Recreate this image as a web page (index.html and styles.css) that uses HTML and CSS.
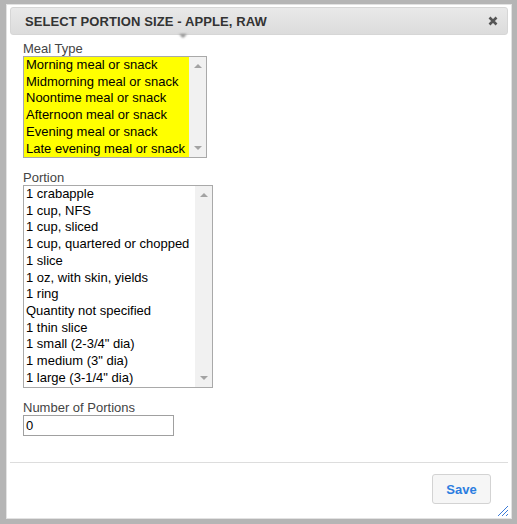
FILE: index.html
```html
<!DOCTYPE html>
<html>
<head>
<meta charset="utf-8">
<link rel="stylesheet" href="styles.css">
</head>
<body>
<div class="page">
  <div class="dialog">
    <div class="titlebar">
      <span class="title">SELECT PORTION SIZE - APPLE, RAW</span>
      <span class="close" aria-label="close">
        <svg width="10" height="10" viewBox="0 0 10 10"><path d="M1.5 1.5 L8.5 8.5 M8.5 1.5 L1.5 8.5" stroke="#555" stroke-width="2.6" stroke-linecap="butt"/></svg>
      </span>
    </div>
    <div class="tip-arrow"></div>
    <div class="content">
      <label class="lbl">Meal Type</label>
      <div class="listbox meal">
        <div class="items">
          <div class="opt sel">Morning meal or snack</div>
          <div class="opt sel">Midmorning meal or snack</div>
          <div class="opt sel">Noontime meal or snack</div>
          <div class="opt sel">Afternoon meal or snack</div>
          <div class="opt sel">Evening meal or snack</div>
          <div class="opt sel">Late evening meal or snack</div>
        </div>
        <div class="scrollbar">
          <span class="arrow up"></span>
          <span class="arrow down"></span>
        </div>
      </div>

      <label class="lbl gap">Portion</label>
      <div class="listbox portion">
        <div class="items">
          <div class="opt">1 crabapple</div>
          <div class="opt">1 cup, NFS</div>
          <div class="opt">1 cup, sliced</div>
          <div class="opt">1 cup, quartered or chopped</div>
          <div class="opt">1 slice</div>
          <div class="opt">1 oz, with skin, yields</div>
          <div class="opt">1 ring</div>
          <div class="opt">Quantity not specified</div>
          <div class="opt">1 thin slice</div>
          <div class="opt">1 small (2-3/4" dia)</div>
          <div class="opt">1 medium (3" dia)</div>
          <div class="opt">1 large (3-1/4" dia)</div>
        </div>
        <div class="scrollbar">
          <span class="arrow up"></span>
          <span class="arrow down"></span>
        </div>
      </div>

      <label class="lbl gap">Number of Portions</label>
      <div class="input">0</div>
    </div>
    <div class="buttonpane">
      <button class="btn">Save</button>
    </div>
    <svg class="resize" width="12" height="12" viewBox="0 0 12 12">
      <path d="M11 1 L1 11 M11 5 L5 11 M11 9 L9 11" stroke="#3b7bd8" stroke-width="1"/>
    </svg>
  </div>
</div>
</body>
</html>
```
FILE: styles.css
```css
html, body {
  margin: 0;
  padding: 0;
}
body {
  background: #b5b5b5;
  font-family: "Liberation Sans", Arial, sans-serif;
  width: 517px;
  height: 524px;
  overflow: hidden;
}
.page {
  padding: 4px 0 0 6px;
}
.dialog {
  position: relative;
  box-sizing: border-box;
  width: 506px;
  height: 515px;
  background: #fff;
  border: 1px solid #e2e2e2;
  padding: 2px 3px 3px 3px;
  display: flex;
  flex-direction: column;
}
.titlebar {
  box-sizing: border-box;
  height: 28px;
  border: 1px solid #d6d6d6;
  border-radius: 3px;
  background: linear-gradient(#e9e9e9, #dcdcdc);
  display: flex;
  align-items: center;
  justify-content: space-between;
  padding: 0 9px 0 14px;
}
.title {
  font-size: 13px;
  font-weight: bold;
  color: #333;
  letter-spacing: 0.1px;
}
.close {
  display: flex;
  width: 10px;
  height: 10px;
}
.tip-arrow {
  position: absolute;
  left: 172px;
  top: 29px;
  width: 0;
  height: 0;
  border-left: 4px solid transparent;
  border-right: 4px solid transparent;
  border-top: 4px solid #8a8a8a;
  filter: blur(1px);
}
.content {
  flex: 1;
  padding: 6px 13px 0 13px;
}
.lbl {
  display: block;
  font-size: 13px;
  line-height: 15px;
  color: #444;
}
.lbl.gap {
  margin-top: 12px;
}
.listbox {
  box-sizing: border-box;
  display: flex;
  border: 1px solid #a9a9a9;
  background: #fff;
}
.listbox.meal {
  width: 184px;
  height: 102px;
}
.listbox.portion {
  width: 190px;
  height: 203px;
}
.items {
  flex: 1;
  overflow: hidden;
}
.opt {
  font-size: 13px;
  line-height: 16.72px;
  height: 16.72px;
  padding-left: 2px;
  color: #000;
  white-space: nowrap;
}
.opt.sel {
  background: #ffff00;
}
.scrollbar {
  width: 17px;
  background: #f1f1f1;
  display: flex;
  flex-direction: column;
  justify-content: space-between;
  align-items: center;
  padding: 7px 0 7px 0;
}
.arrow {
  width: 0;
  height: 0;
  border-left: 4px solid transparent;
  border-right: 4px solid transparent;
}
.arrow.up {
  border-bottom: 4px solid #a3a3a3;
}
.arrow.down {
  border-top: 4px solid #a3a3a3;
}
.input {
  box-sizing: border-box;
  width: 151px;
  height: 21px;
  border: 1px solid #a0a0a0;
  font-size: 13px;
  line-height: 19px;
  padding-left: 2px;
  color: #000;
}
.buttonpane {
  height: 53px;
  border-top: 1px solid #dddddd;
  display: flex;
  justify-content: flex-end;
  align-items: flex-start;
  padding: 11px 17px 0 0;
  box-sizing: border-box;
}
.btn {
  box-sizing: border-box;
  width: 59px;
  height: 30px;
  border: 1px solid #d3d3d3;
  border-radius: 3px;
  background: #f6f6f6;
  color: #2b7de0;
  font-family: "Liberation Sans", Arial, sans-serif;
  font-size: 13px;
  font-weight: bold;
  padding: 0;
}
.resize {
  position: absolute;
  right: 2px;
  bottom: 1px;
}
```
